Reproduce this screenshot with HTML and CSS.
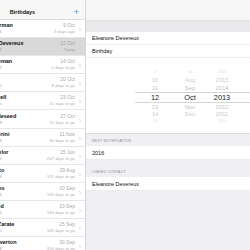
FILE: index.html
```html
<!DOCTYPE html>
<html lang="en">
<head>
  <meta charset="UTF-8">
  <meta name="viewport" content="width=device-width, initial-scale=1.0">
  <title>Birthdays</title>
  <link rel="stylesheet" href="styles.css">
</head>
<body>
  <div class="app">
    <aside class="list-pane">
      <header class="list-head">
        <span class="title">Birthdays</span>
        <span class="add">+</span>
      </header>
      <ul class="list">
        <li class="row"><div class="who"><b>Anna Sherman</b><small>Friend, age 31</small></div><div class="when"><span>9 Oct</span><small>3 days ago</small></div><i class="chev">›</i></li>
        <li class="row selected"><div class="who"><b>Eleanore Devereux</b><small>Friend, age 31</small></div><div class="when"><span>12 Oct</span><small>Today</small></div><i class="chev">›</i></li>
        <li class="row"><div class="who"><b>Jenny Croman</b><small>Friend, age 27</small></div><div class="when"><span>14 Oct</span><small>2 days to go</small></div><i class="chev">›</i></li>
        <li class="row"><div class="who"><b>Tom Wu</b><small>Friend, age 40</small></div><div class="when"><span>20 Oct</span><small>8 days to go</small></div><i class="chev">›</i></li>
        <li class="row"><div class="who"><b>Chris Farrell</b><small>Friend, age 35</small></div><div class="when"><span>23 Oct</span><small>11 days to go</small></div><i class="chev">›</i></li>
        <li class="row"><div class="who"><b>John Appleseed</b><small>Friend, age 29</small></div><div class="when"><span>27 Oct</span><small>15 days to go</small></div><i class="chev">›</i></li>
        <li class="row"><div class="who"><b>Gina Bellerini</b><small>Friend, age 33</small></div><div class="when"><span>11 Nov</span><small>30 days to go</small></div><i class="chev">›</i></li>
        <li class="row"><div class="who"><b>Danny Taylor</b><small>Friend, age 45</small></div><div class="when"><span>15 Jun</span><small>247 days to go</small></div><i class="chev">›</i></li>
        <li class="row"><div class="who"><b>Daniel Soto</b><small>Friend, age 38</small></div><div class="when"><span>29 Aug</span><small>322 days to go</small></div><i class="chev">›</i></li>
        <li class="row"><div class="who"><b>Kelly Jones</b><small>Friend, age 26</small></div><div class="when"><span>10 Sep</span><small>334 days to go</small></div><i class="chev">›</i></li>
        <li class="row"><div class="who"><b>Carl Arnold</b><small>Friend, age 52</small></div><div class="when"><span>19 Sep</span><small>343 days to go</small></div><i class="chev">›</i></li>
        <li class="row"><div class="who"><b>Eduardo Zarate</b><small>Friend, age 30</small></div><div class="when"><span>25 Sep</span><small>349 days to go</small></div><i class="chev">›</i></li>
        <li class="row"><div class="who"><b>Jessica Overton</b><small>Friend, age 34</small></div><div class="when"><span>30 Sep</span><small>354 days to go</small></div><i class="chev">›</i></li>
      </ul>
    </aside>

    <main class="detail">
      <div class="detail-head"></div>
      <div class="band"></div>
      <div class="cell">Eleanore Devereux</div>
      <div class="cell">Birthday</div>

      <div class="picker">
        <div class="prow far-top"><span>9</span><span>Jul</span><span>2016</span></div>
        <div class="prow near2"><span>10</span><span>Aug</span><span>2015</span></div>
        <div class="prow near1"><span>11</span><span>Sep</span><span>2014</span></div>
        <div class="prow sel"><span>12</span><span>Oct</span><span>2013</span></div>
        <div class="prow near1 down"><span>13</span><span>Nov</span><span>2012</span></div>
        <div class="prow near2 down"><span>14</span><span>Dec</span><span>2011</span></div>
        <div class="prow far-bottom"><span>15</span><span></span><span>2010</span></div>
      </div>

      <div class="section-label">Next Notification</div>
      <div class="cell low">2016</div>
      <div class="section-label second">Linked Contact</div>
      <div class="cell low">Eleanore Devereux</div>
    </main>
  </div>
</body>
</html>
```

FILE: styles.css
```css
body {
  margin: 0;
  width: 250px;
  height: 250px;
  overflow: hidden;
  font-family: "Liberation Sans", Arial, sans-serif;
  color: #111;
  background: #efeff4;
}

.app {
  display: flex;
  height: 250px;
}

/* left list */
.list-pane {
  flex: none;
  width: 126px;
  margin-left: -40px;
  background: #fff;
  border-right: 1px solid #d6d6d8;
  box-sizing: border-box;
}

.list-head {
  height: 20px;
  box-sizing: border-box;
  background: #f7f7f7;
  border-bottom: 1px solid #dcdcdc;
  display: flex;
  align-items: flex-end;
  justify-content: center;
  padding-bottom: 4px;
  position: relative;
}

.title {
  font-size: 5.5px;
  font-weight: bold;
}

.add {
  position: absolute;
  right: 6px;
  bottom: 2px;
  color: #3d97f5;
  font-size: 9px;
  font-weight: 300;
  line-height: 9px;
}

.list {
  list-style: none;
  margin: 0;
  padding: 0;
}

.row {
  height: 18.1px;
  box-sizing: border-box;
  display: flex;
  align-items: center;
  padding: 0 4px 0 14px;
  border-bottom: 0.5px solid #e6e6e6;
}

.row.selected {
  background: #d9d9d9;
}

.who {
  flex: 1;
  display: flex;
  flex-direction: column;
  white-space: nowrap;
  overflow: hidden;
}

.who b {
  font-size: 5.5px;
  line-height: 7px;
}

.who small,
.when small {
  font-size: 4.3px;
  line-height: 6px;
  color: #9b9b9b;
}

.when {
  display: flex;
  flex-direction: column;
  align-items: flex-end;
  white-space: nowrap;
  color: #a9a9a9;
}

.when span {
  font-size: 5px;
  line-height: 7px;
}

.when small {
  color: #b1b1b1;
}

.selected .when span,
.selected .when small {
  color: #a3a3a3;
}

.chev {
  font-style: normal;
  color: #c7c7cc;
  font-size: 7px;
  width: 6px;
  text-align: right;
  margin-top: 2px;
}

/* detail */
.detail {
  flex: 1;
  display: flex;
  flex-direction: column;
}

.detail-head {
  height: 20px;
  background: #f6f6f6;
}

.band {
  height: 12px;
  background: #e9e9eb;
  border-top: 1px solid #e2e2e4;
  box-sizing: border-box;
}

.cell {
  height: 13px;
  box-sizing: border-box;
  background: #fff;
  font-size: 5.5px;
  padding-left: 6px;
  display: flex;
  align-items: center;
  border-bottom: 0.5px solid #ececec;
}

.cell.low {
  height: 14px;
}

.picker {
  background: #fff;
  height: 76px;
  box-sizing: border-box;
  padding-top: 10px;
  border-bottom: 0.5px solid #dcdcdc;
}

.prow {
  display: grid;
  grid-template-columns: 30px 40px 24px;
  margin-left: 49px;
  padding-left: 5px;
  height: 8px;
  align-items: center;
  color: #c4c4c4;
  font-size: 5.8px;
  line-height: 8px;
  text-align: center;
}

.prow.down {
  height: 7px;
}

.prow.far-top {
  color: #dedede;
  font-size: 3.6px;
}

.prow.far-bottom {
  height: 6px;
  color: #dedede;
  font-size: 4px;
}

.prow.near2 {
  color: #cbcbcb;
}

.prow.sel {
  color: #222;
  font-size: 7.4px;
  height: 9px;
  border-top: 0.5px solid #d4d4d4;
  border-bottom: 0.5px solid #d4d4d4;
}

.section-label {
  height: 12px;
  box-sizing: border-box;
  padding: 0 0 3px 6px;
  display: flex;
  align-items: flex-end;
  font-size: 3.6px;
  text-transform: uppercase;
  letter-spacing: 0.2px;
  color: #8e8e93;
}

.section-label.second {
  height: 17px;
}
```
